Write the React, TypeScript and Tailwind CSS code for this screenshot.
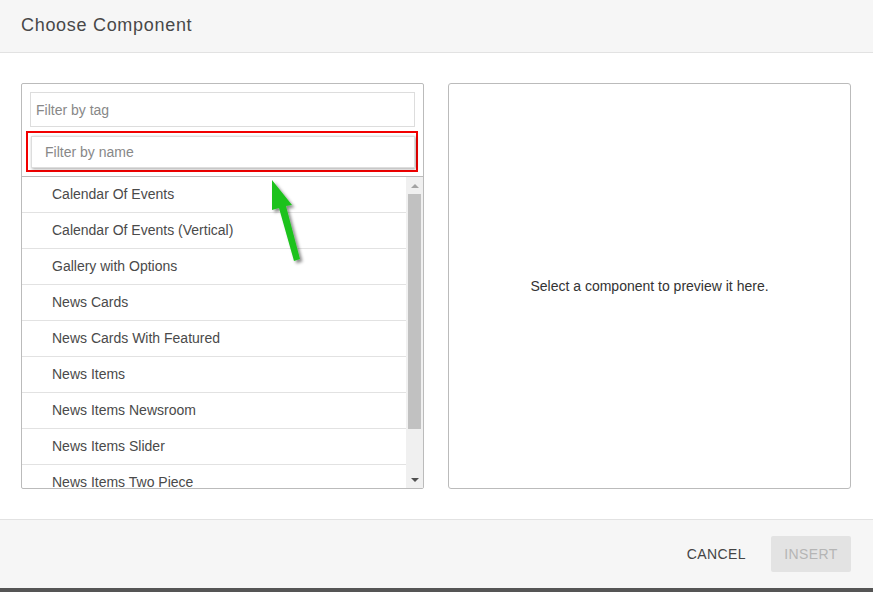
import React from 'react';

const components = [
  'Calendar Of Events',
  'Calendar Of Events (Vertical)',
  'Gallery with Options',
  'News Cards',
  'News Cards With Featured',
  'News Items',
  'News Items Newsroom',
  'News Items Slider',
  'News Items Two Piece',
];

function GreenArrow() {
  return (
    <svg
      className="absolute left-[262px] top-[174px] pointer-events-none"
      width="50"
      height="96"
      viewBox="262 174 50 96"
    >
      <defs>
        <filter id="arrowShadow" x="-30%" y="-30%" width="160%" height="160%">
          <feDropShadow dx="2.5" dy="2.5" stdDeviation="1.5" floodColor="#000" floodOpacity="0.45" />
        </filter>
      </defs>
      <polygon
        points="272,180 292,205 286,206 300,259 294,261 279,208 272,210"
        fill="#1dc21d"
        filter="url(#arrowShadow)"
      />
    </svg>
  );
}

export default function App() {
  return (
    <div
      className="relative w-[873px] h-[592px] bg-white flex flex-col overflow-hidden text-[#444]"
      style={{ fontFamily: '"Liberation Sans", Arial, sans-serif' }}
    >
      {/* header */}
      <div className="h-[53px] shrink-0 bg-[#f6f6f6] border-b border-[#e2e2e2] flex items-center px-[21px]">
        <h1 className="text-[18px] text-[#484848] tracking-[0.7px] pb-[2px]">Choose Component</h1>
      </div>

      {/* body */}
      <div className="flex-1 flex gap-[24px] pl-[21px] pr-[22px] pt-[30px] pb-[30px]">
        {/* left panel */}
        <div className="w-[403px] h-[406px] border border-[#bbb] rounded-[2px] flex flex-col overflow-hidden">
          <div className="pt-[8px] px-[8px]">
            <input
              className="w-[385px] h-[35px] border border-[#ddd] px-[5px] text-[14px] text-[#444] placeholder:text-[#888] outline-none"
              placeholder="Filter by tag"
              readOnly
            />
          </div>
          <div className="mt-[4px] ml-[4px] w-[392px] h-[41px] border-2 border-[#f20000] p-[3px] pr-[1px] pb-[2px]">
            <input
              className="w-full h-full border border-[#ddd] px-[13px] text-[14px] text-[#444] placeholder:text-[#888] outline-none shadow-[1px_1px_3px_rgba(0,0,0,0.35)]"
              placeholder="Filter by name"
              readOnly
            />
          </div>
          <div className="mt-[4px] flex-1 border-t border-[#bbb] flex overflow-hidden">
            <ul className="flex-1 overflow-hidden">
              {components.map((name) => (
                <li
                  key={name}
                  className="h-[36px] border-b border-[#e2e2e2] pl-[30px] flex items-center text-[14px] text-[#4a4a4a]"
                >
                  {name}
                </li>
              ))}
            </ul>
            {/* scrollbar */}
            <div className="w-[17px] bg-[#f0f0f0] flex flex-col items-center">
              <div className="h-[17px] flex items-center justify-center">
                <div className="w-0 h-0 border-l-[4px] border-r-[4px] border-b-[4px] border-l-transparent border-r-transparent border-b-[#a3a3a3]" />
              </div>
              <div className="w-[13px] h-[235px] bg-[#c1c1c1]" />
              <div className="flex-1" />
              <div className="h-[17px] flex items-center justify-center">
                <div className="w-0 h-0 border-l-[4px] border-r-[4px] border-t-[4px] border-l-transparent border-r-transparent border-t-[#505050]" />
              </div>
            </div>
          </div>
        </div>

        {/* right panel */}
        <div className="w-[403px] h-[406px] border border-[#bbb] rounded-[3px] flex items-center justify-center">
          <p className="text-[14px] text-[#333]">Select a component to preview it here.</p>
        </div>
      </div>

      {/* footer */}
      <div className="h-[69px] shrink-0 bg-[#f6f6f6] border-t border-[#e2e2e2] flex items-center justify-end pr-[22px] gap-[25px]">
        <button className="text-[14px] text-[#444] tracking-[0.4px] uppercase">Cancel</button>
        <button className="w-[80px] h-[36px] bg-[#e3e3e3] rounded-[2px] text-[14px] text-[#b5b5b5] tracking-[0.4px] uppercase">
          Insert
        </button>
      </div>
      <div className="h-[4px] shrink-0 bg-[#555]" />

      <GreenArrow />
    </div>
  );
}
